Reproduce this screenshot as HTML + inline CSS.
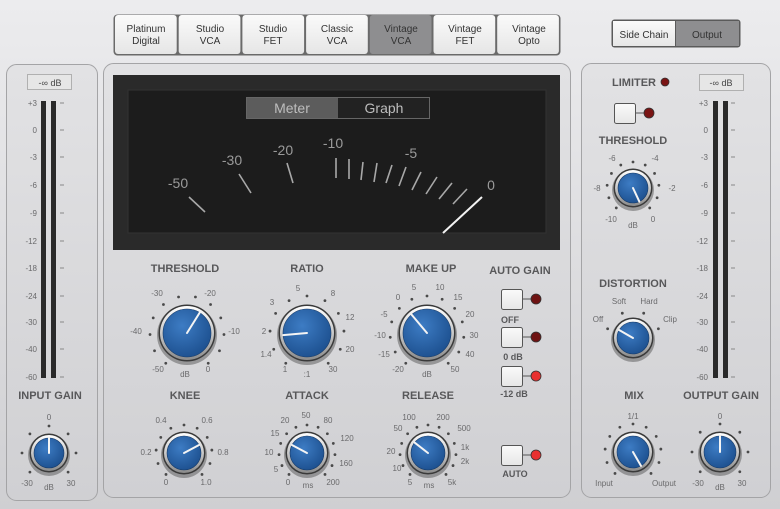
<!DOCTYPE html>
<html><head><meta charset="utf-8"><style>
html,body{margin:0;padding:0;width:780px;height:509px;overflow:hidden;background:#dcdcde}
svg{display:block}
text{font-family:"Liberation Sans",sans-serif}
.t{font-size:11px;font-weight:bold;fill:#58585a;text-anchor:middle}
.n{font-size:8px;fill:#6a6a6c;text-anchor:middle}
.b{font-size:10px;fill:#333;text-anchor:middle}
.m{font-size:14px;fill:#9a9a9a;text-anchor:middle}
</style></head><body>
<svg id="s" width="780" height="509" viewBox="0 0 780 509" xmlns="http://www.w3.org/2000/svg">
<defs>
<linearGradient id="bg" x1="0" y1="0" x2="0" y2="1"><stop offset="0" stop-color="#ececee"/><stop offset="1" stop-color="#cfcfd2"/></linearGradient>
<linearGradient id="pn" x1="0" y1="0" x2="0" y2="1"><stop offset="0" stop-color="#e2e2e4"/><stop offset="1" stop-color="#d0d0d3"/></linearGradient>
<linearGradient id="btn" x1="0" y1="0" x2="0" y2="1"><stop offset="0" stop-color="#fafafa"/><stop offset="1" stop-color="#e6e6e6"/></linearGradient>
<linearGradient id="bez" x1="0" y1="0" x2="0" y2="1"><stop offset="0" stop-color="#ffffff"/><stop offset="0.5" stop-color="#c8c8c8"/><stop offset="1" stop-color="#8a8a8a"/></linearGradient>
<radialGradient id="blue" cx="0.4" cy="0.35" r="0.7"><stop offset="0" stop-color="#3d7cc4"/><stop offset="1" stop-color="#1c4f8e"/></radialGradient>
</defs>
<rect width="780" height="509" fill="url(#bg)"/>
<rect x="6.5" y="64.5" width="91" height="436" rx="10" fill="url(#pn)" stroke="#a4a4a6"/>
<rect x="103.5" y="63.5" width="467" height="434" rx="10" fill="url(#pn)" stroke="#a4a4a6"/>
<rect x="581.5" y="63.5" width="189" height="434" rx="10" fill="url(#pn)" stroke="#a4a4a6"/>
<rect x="113.5" y="14.5" width="447" height="41" rx="4" fill="#6a6a6a"/>
<g id="tb"></g>
<text class="b" x="146" y="32">Platinum</text><text class="b" x="146" y="44">Digital</text>
<text class="b" x="210" y="32">Studio</text><text class="b" x="210" y="44">VCA</text>
<text class="b" x="273" y="32">Studio</text><text class="b" x="273" y="44">FET</text>
<text class="b" x="337" y="32">Classic</text><text class="b" x="337" y="44">VCA</text>
<text class="b" x="401" y="32">Vintage</text><text class="b" x="401" y="44">VCA</text>
<text class="b" x="465" y="32">Vintage</text><text class="b" x="465" y="44">FET</text>
<text class="b" x="529" y="32">Vintage</text><text class="b" x="529" y="44">Opto</text>
<rect x="611.5" y="19.5" width="129" height="28" rx="3" fill="#5a5a5a"/>
<rect x="613" y="21" width="62" height="25" fill="url(#btn)"/>
<rect x="676" y="21" width="63" height="25" fill="#8e8e90"/>
<text class="b" x="644" y="38">Side Chain</text><text class="b" x="707" y="38">Output</text>
<rect x="113" y="75" width="447" height="175" fill="#2a2a2a"/>
<rect x="128" y="90" width="418" height="143" fill="#1c1c1c" stroke="#333"/>
<rect x="246.5" y="97.5" width="183" height="21" fill="#222" stroke="#666"/>
<rect x="247" y="98" width="91" height="20" fill="#5c5c5c"/>
<text x="292" y="113" font-size="14" fill="#bdbdbd" text-anchor="middle">Meter</text>
<text x="384" y="113" font-size="14" fill="#bdbdbd" text-anchor="middle">Graph</text>
<g stroke="#a8a8a8" stroke-width="1.6">
<line x1="189" y1="197" x2="205" y2="212"/>
<line x1="239" y1="174" x2="251" y2="193"/>
<line x1="287" y1="163" x2="293" y2="183"/>
<line x1="336" y1="158" x2="336" y2="178"/>
<line x1="349" y1="159" x2="349" y2="179"/>
<line x1="363" y1="162" x2="361" y2="180"/>
<line x1="377" y1="163" x2="374" y2="182"/>
<line x1="392" y1="165" x2="386" y2="183"/>
<line x1="406" y1="167" x2="399" y2="186"/>
<line x1="421" y1="172" x2="412" y2="190"/>
<line x1="437" y1="177" x2="426" y2="194"/>
<line x1="452" y1="183" x2="439" y2="199"/>
<line x1="467" y1="189" x2="453" y2="204"/>
</g>
<text class="m" x="178" y="188">-50</text><text class="m" x="232" y="165">-30</text>
<text class="m" x="283" y="155">-20</text><text class="m" x="333" y="148">-10</text>
<text class="m" x="411" y="158">-5</text><text class="m" x="491" y="190">0</text>
<line x1="443" y1="233" x2="482" y2="197" stroke="#f2f2f2" stroke-width="2"/>
<text class="t" x="185" y="272">THRESHOLD</text><text class="t" x="307" y="272">RATIO</text>
<text class="t" x="431" y="272">MAKE UP</text><text class="t" x="520" y="274">AUTO GAIN</text>
<text class="t" x="185" y="399">KNEE</text><text class="t" x="307" y="399">ATTACK</text><text class="t" x="428" y="399">RELEASE</text>
<g id="k"></g>
<text class="n" x="157" y="296">-30</text><text class="n" x="210" y="296">-20</text>
<text class="n" x="136" y="334">-40</text><text class="n" x="234" y="334">-10</text>
<text class="n" x="158" y="372">-50</text><text class="n" x="208" y="372">0</text><text class="n" x="185" y="377">dB</text>
<text class="n" x="298" y="291">5</text><text class="n" x="333" y="296">8</text><text class="n" x="272" y="305">3</text>
<text class="n" x="350" y="320">12</text><text class="n" x="264" y="334">2</text><text class="n" x="350" y="352">20</text>
<text class="n" x="266" y="357">1.4</text><text class="n" x="285" y="372">1</text><text class="n" x="307" y="377">:1</text><text class="n" x="333" y="372">30</text>
<text class="n" x="398" y="300">0</text><text class="n" x="414" y="290">5</text><text class="n" x="440" y="290">10</text>
<text class="n" x="458" y="300">15</text><text class="n" x="470" y="317">20</text><text class="n" x="474" y="338">30</text>
<text class="n" x="470" y="357">40</text><text class="n" x="455" y="372">50</text><text class="n" x="427" y="377">dB</text>
<text class="n" x="384" y="317">-5</text><text class="n" x="380" y="338">-10</text><text class="n" x="384" y="357">-15</text><text class="n" x="398" y="372">-20</text>
<text class="n" x="161" y="423">0.4</text><text class="n" x="207" y="423">0.6</text>
<text class="n" x="146" y="455">0.2</text><text class="n" x="223" y="455">0.8</text>
<text class="n" x="166" y="485">0</text><text class="n" x="206" y="485">1.0</text>
<text class="n" x="285" y="423">20</text><text class="n" x="306" y="418">50</text><text class="n" x="328" y="423">80</text>
<text class="n" x="347" y="441">120</text><text class="n" x="346" y="466">160</text><text class="n" x="333" y="485">200</text>
<text class="n" x="275" y="436">15</text><text class="n" x="269" y="455">10</text><text class="n" x="276" y="472">5</text>
<text class="n" x="288" y="485">0</text><text class="n" x="308" y="488">ms</text>
<text class="n" x="409" y="420">100</text><text class="n" x="443" y="420">200</text><text class="n" x="464" y="431">500</text>
<text class="n" x="465" y="450">1k</text><text class="n" x="465" y="464">2k</text><text class="n" x="452" y="485">5k</text>
<text class="n" x="398" y="431">50</text><text class="n" x="391" y="454">20</text><text class="n" x="397" y="471">10</text>
<text class="n" x="410" y="485">5</text><text class="n" x="429" y="488">ms</text>
<text class="t" x="510" y="323" style="font-size:9px">OFF</text>
<text class="t" x="513" y="360" style="font-size:9px">0 dB</text>
<text class="t" x="514" y="397" style="font-size:9px">-12 dB</text>
<text class="t" x="515" y="477" style="font-size:9px">AUTO</text>
<rect x="27.5" y="74.5" width="44" height="15" fill="#e6e6e6" stroke="#b0b0b0"/>
<text x="50" y="86" font-size="9" fill="#444" text-anchor="middle">-∞ dB</text>
<g id="lm"></g>
<text class="t" x="50" y="399">INPUT GAIN</text>
<text class="n" x="49" y="420">0</text><text class="n" x="27" y="486">-30</text><text class="n" x="49" y="490">dB</text><text class="n" x="71" y="486">30</text>
<text class="t" x="634" y="86">LIMITER</text>
<rect x="699.5" y="74.5" width="44" height="16" fill="#e6e6e6" stroke="#b0b0b0"/>
<text x="721" y="86" font-size="9" fill="#444" text-anchor="middle">-∞ dB</text>
<text class="t" x="633" y="144">THRESHOLD</text>
<text class="n" x="612" y="161">-6</text><text class="n" x="655" y="161">-4</text>
<text class="n" x="597" y="191">-8</text><text class="n" x="672" y="191">-2</text>
<text class="n" x="611" y="222">-10</text><text class="n" x="653" y="222">0</text><text class="n" x="633" y="228">dB</text>
<text class="t" x="633" y="287">DISTORTION</text>
<text class="n" x="619" y="304">Soft</text><text class="n" x="649" y="304">Hard</text>
<text class="n" x="598" y="322">Off</text><text class="n" x="670" y="322">Clip</text>
<text class="t" x="634" y="399">MIX</text><text class="t" x="721" y="399">OUTPUT GAIN</text>
<text class="n" x="633" y="419">1/1</text><text class="n" x="604" y="486">Input</text><text class="n" x="664" y="486">Output</text>
<text class="n" x="720" y="419">0</text><text class="n" x="698" y="486">-30</text><text class="n" x="720" y="490">dB</text><text class="n" x="742" y="486">30</text>
<g font-family="Liberation Sans, sans-serif" font-size="8" fill="#6a6a6c" text-anchor="end">
<text x="37" y="106">+3</text><text x="37" y="133">0</text><text x="37" y="160">-3</text><text x="37" y="188">-6</text><text x="37" y="216">-9</text><text x="37" y="244">-12</text><text x="37" y="271">-18</text><text x="37" y="299">-24</text><text x="37" y="325">-30</text><text x="37" y="352">-40</text><text x="37" y="380">-60</text>
<text x="708" y="106">+3</text><text x="708" y="133">0</text><text x="708" y="160">-3</text><text x="708" y="188">-6</text><text x="708" y="216">-9</text><text x="708" y="244">-12</text><text x="708" y="271">-18</text><text x="708" y="299">-24</text><text x="708" y="325">-30</text><text x="708" y="352">-40</text><text x="708" y="380">-60</text>
</g>
</svg>
<script>
var NS="http://www.w3.org/2000/svg";
function el(p,n,a){var e=document.createElementNS(NS,n);for(var k in a)e.setAttribute(k,a[k]);p.appendChild(e);return e;}
var tb=document.getElementById('tb');
for(var i=0;i<7;i++){var x=114+i*63.7;el(tb,'rect',{x:x+1,y:15,width:61.7,height:39,rx:3,fill:i==4?'#8e8e90':'url(#btn)'});}
var k=document.getElementById('k');
function knob(x,y,r,ang,n,a0,a1,dr){
 if(n){for(var i=0;i<n;i++){var a=(a0+(a1-a0)*i/(n-1))*Math.PI/180;el(k,'circle',{cx:x+dr*Math.sin(a),cy:y-dr*Math.cos(a),r:1.4,fill:'#4a4a4a'});}}
 el(k,'circle',{cx:x,cy:y+2,r:r+3,fill:'#555',opacity:0.5});
 el(k,'circle',{cx:x,cy:y,r:r+1.5,fill:'#3a3a3a'});
 el(k,'circle',{cx:x,cy:y,r:r,fill:'url(#bez)'});
 el(k,'circle',{cx:x,cy:y,r:r-3,fill:'url(#blue)',stroke:'#163a68','stroke-width':0.6});
 var a=ang*Math.PI/180;
 el(k,'line',{x1:x,y1:y,x2:x+(r-3)*Math.sin(a),y2:y-(r-3)*Math.cos(a),stroke:'#f4f4f4','stroke-width':2,'stroke-linecap':'round'});
}
knob(187,333,27,32,12,-145,145,37);
knob(307,333,27,-95,11,-145,145,37);
knob(427,333,27,-40,13,-145,145,37);
knob(184,453,20,62,11,-140,140,28);
knob(307,453,20,-62,13,-140,140,28);
knob(428,453,20,-52,13,-140,140,28);
knob(49,453,18,0,7,-135,135,27);
knob(633,188,18,155,11,-140,140,26);
knob(633,338,19,-60,4,-70,70,27);
knob(633,452,19,150,11,-140,140,28);
knob(720,452,19,0,7,-135,135,28);
function sw(x,y,led){el(k,'line',{x1:x+20,y1:y+10,x2:x+30,y2:y+10,stroke:'#555'});
 el(k,'rect',{x:x+0.5,y:y+0.5,width:21,height:20,rx:2,fill:'url(#btn)',stroke:'#555'});
 el(k,'circle',{cx:x+35,cy:y+10,r:5,fill:led,stroke:'#333','stroke-width':0.8});}
sw(501,289,'#6e1212');sw(501,327,'#6e1212');sw(501,366,'#e83030');sw(501,445,'#e83030');sw(614,103,'#7a1414');
el(k,'circle',{cx:665,cy:82,r:4,fill:'#7a1414',stroke:'#333','stroke-width':0.8});
var lm=document.getElementById('lm');
var ys=[103,130,157,185,213,241,268,296,322,349,377];
function meter(bx,tx){el(lm,'rect',{x:bx,y:101,width:5,height:277,fill:'#2a2a2a'});el(lm,'rect',{x:bx+10,y:101,width:5,height:277,fill:'#2a2a2a'});
 for(var i=0;i<ys.length;i++){el(lm,'line',{x1:tx,y1:ys[i],x2:tx+4,y2:ys[i],stroke:'#888'});}}
meter(41,60);meter(713,731);
</script>
</body></html>
